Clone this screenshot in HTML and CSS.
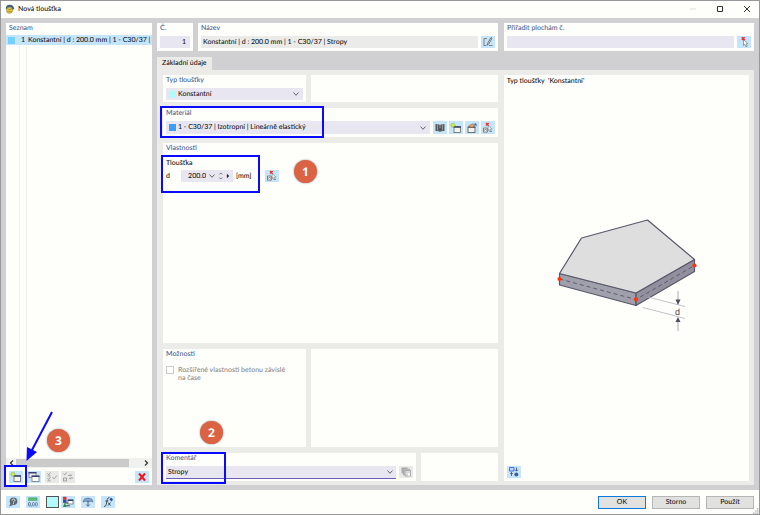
FILE: index.html
```
<!DOCTYPE html>
<html lang="cs">
<head>
  <meta charset="UTF-8">
  <title>Nová tloušťka</title>
  <link rel="stylesheet" href="styles.css">
</head>
<body>
  <svg class="defs" aria-hidden="true">
    <symbol id="chevron" viewBox="0 0 8 8"><path d="M1.5 2.5 4 5.3 6.5 2.5" fill="none" stroke="#666" stroke-width="1"/></symbol>
    <symbol id="new" viewBox="0 0 14 12">
      <rect x="5" y="5" width="6.5" height="5.5" fill="#f4f4ee" stroke="#777" stroke-width=".9"/>
      <path d="M4.500 4.200h7.500v1.500H4.500z" fill="#3a4070"/>
      <path d="M4 .8v5M1.500 3.300h5M2.200 1.500l3.600 3.600M5.800 1.500 2.200 5.100" stroke="#7fae16" stroke-width=".8"/>
      <circle cx="4" cy="3.300" r="1.400" fill="#d6ee25"/>
    </symbol>
    <symbol id="edit-window" viewBox="0 0 14 12">
      <rect x="3" y="5" width="7" height="5.5" fill="#f2f0ec" stroke="#666" stroke-width=".9"/>
      <path d="M3 4.500h7.500v1.500H3z" fill="#6d6262"/>
      <path d="M4 3.500 8 1.800l2 1-2.500 2.400H4.500z" fill="#dda070" stroke="#8b5d42" stroke-width=".5"/>
      <path d="M9 2l2-1 1 3-2.500-.7z" fill="#4673bd"/>
    </symbol>
    <symbol id="pick" viewBox="0 0 14 12">
      <path d="M2.500 6h3.800v4.200H2.500z" fill="#eee" stroke="#666" stroke-width=".8"/>
      <path d="M3.500 8.500l1-1.500 1 1.500M8.500 9.500H11" fill="none" stroke="#666" stroke-width=".7"/>
      <path d="M7.200 3.500v5l1.200-1 1 2 .9-.5-1-1.900 1.600-.2z" fill="#fff" stroke="#777" stroke-width=".6"/>
      <path d="M5 1l2.600 2.600M7.600 1 5 3.600" stroke="#e8292d" stroke-width="1.300"/>
    </symbol>
    <symbol id="cursor" viewBox="0 0 14 12">
      <path d="M6.500 3.500v6l1.400-1.200 1.100 2.500 1.200-.6-1.200-2.400 1.900-.1z" fill="#fff" stroke="#777" stroke-width=".7"/>
      <path d="M4.800 1.200l2.800 2.800M7.600 1.200 4.800 4" stroke="#e8292d" stroke-width="1.400"/>
    </symbol>
    <symbol id="rename" viewBox="0 0 14 12">
      <path d="M6 2.500H3v7M3 9.500h2M8 9.500h3.500" fill="none" stroke="#777" stroke-width=".9"/>
      <path d="M10 1.500 6.500 7.500 6 9.300l1.500-1 3.500-6z" fill="#eee" stroke="#555" stroke-width=".8"/>
    </symbol>
    <symbol id="books" viewBox="0 0 14 12">
      <path d="M2.500 2 6 2.500l1 .5 1-.5 3.500-.5v7L8 9.200 7 10 6 9.200l-3.500-.2z" fill="#55585a"/>
      <path d="M4.500 2.500v6M9.500 2.500v6M7 2v4" stroke="#b9c6ce" stroke-width=".6"/>
    </symbol>
    <symbol id="copy-window" viewBox="0 0 14 12">
      <rect x="2" y="1.5" width="7" height="5" fill="#eee" stroke="#777" stroke-width=".8"/>
      <path d="M1.600 1h7.800v1.500H1.600z" fill="#3a4070"/>
      <rect x="5" y="5" width="7" height="5.5" fill="#fff" stroke="#777" stroke-width=".8"/>
      <path d="M4.600 4.500h7.800v1.500H4.600z" fill="#3a4070"/>
    </symbol>
    <symbol id="check-all" viewBox="0 0 14 12">
      <path d="M2.500 2.500l1.200 1.500L5.500 1.500M2.500 7l1.200 1.500L5.500 6M7.500 6l1.500 1.800L12 4.500M2.500 5h3M2.500 9.800h3" fill="none" stroke="#989898" stroke-width=".9"/>
    </symbol>
    <symbol id="check-swap" viewBox="0 0 14 12">
      <path d="M2.500 2.500l1.200 1.500L5.500 1.500M2.500 7h3v3h-3zM7 4.500h3.500L9.500 3.300M12 7H8.500l1 1.300" fill="none" stroke="#989898" stroke-width=".9"/>
    </symbol>
    <symbol id="delete" viewBox="0 0 14 12"><path d="M4 2.500 10 9.500M10 2.500 4 9.500" stroke="#f0141c" stroke-width="2"/></symbol>
    <symbol id="help" viewBox="0 0 14 12">
      <circle cx="7.500" cy="5.300" r="3.800" fill="#5d666e"/>
      <path d="M4.500 7.500 3 10.500l4-1.500z" fill="#5d666e"/>
      <path d="M6 4.500q0-1.500 1.500-1.500T9 4.500q0 .8-1.500 1.200v.8M7.500 7.200v.9" fill="none" stroke="#e5eef5" stroke-width=".9"/>
    </symbol>
    <symbol id="units" viewBox="0 0 14 12">
      <rect x="2" y="1.500" width="9.500" height="3.500" fill="#62bd80"/>
      <path d="M4 1.500v1.500M6 1.500v1.500M8 1.500v1.500M10 1.500v1.500" stroke="#3d8a5a" stroke-width=".6"/>
      <path d="M5.300 9.500v1" stroke="#446186"/>
      <rect x="2.500" y="6.500" width="1.800" height="3.500" rx=".8" fill="none" stroke="#446186" stroke-width=".8"/>
      <rect x="6.500" y="6.500" width="1.800" height="3.500" rx=".8" fill="none" stroke="#58799e" stroke-width=".8"/>
      <rect x="9.500" y="6.500" width="1.800" height="3.500" rx=".8" fill="none" stroke="#58799e" stroke-width=".8"/>
    </symbol>
    <symbol id="display" viewBox="0 0 14 12">
      <path d="M4 7h3.500M4 9.800h5" stroke="#333" fill="none" stroke-width=".9"/>
      <path d="M2 .8h3.500v3H2z" fill="#e02c2c"/><path d="M2 3.800h3.500v3H2z" fill="#3a4a9b"/><path d="M3.700 6.500 5.500 11H2z" fill="#2c9149"/>
      <rect x="7" y="4" width="5" height="4" fill="#fff" stroke="#666" stroke-width=".7"/>
      <path d="M6.700 3.500h5.600v1.500H6.700z" fill="#3a4070"/>
    </symbol>
    <symbol id="umbrella" viewBox="0 0 14 12">
      <path d="M2 6Q2.500 2 7 2t5 4l-2-.8L7.500 6 5 5.200z" fill="#7ea8d2" stroke="#56677b" stroke-width=".6"/>
      <path d="M7 4.500v5.500M5.300 8.500 7 10.300l1.700-1.800" fill="none" stroke="#56677b"/>
    </symbol>
    <symbol id="fx" viewBox="0 0 14 12">
      <path d="M3 10.500q1.700.2 2.200-2L6.300 3.500Q6.800 1.300 8.500 1.700M4.300 5h3M7 6.500l2.500 3M9.500 6.500l-2.500 3" fill="none" stroke="#333f50" stroke-width=".9"/>
      <path d="M8.500 3.500 10 1.500l2 2-1.500 2z" fill="#3b4b8f"/>
    </symbol>
    <symbol id="copies" viewBox="0 0 14 12">
      <path d="M2.500 1.500h6v6h-6z" fill="#aaa"/><path d="M4.500 3h6v6h-6z" fill="#c9c9c9" stroke="#999" stroke-width=".6"/>
      <path d="M6 4.500h5.500V10H6z" fill="#dadada" stroke="#999" stroke-width=".7"/><path d="M9 7.500h2v2H9z" fill="#fff"/>
    </symbol>
    <symbol id="view" viewBox="0 0 14 12">
      <path d="M2.500 1.500h4.500v3.500H2.500z" fill="#c3d8ff" stroke="#3d70ec"/><path d="M9.500 1.500v3.500M8 3.700l1.500 1.500L11 3.700M4.500 10V6.500M3.200 8l1.300-1.500L5.800 8" fill="none" stroke="#42474e" stroke-width=".8"/>
      <circle cx="9.300" cy="8.500" r="2" fill="#405f9c"/>
    </symbol>
  </svg>

  <div class="window">
    <header class="titlebar">
      <svg class="app-icon" viewBox="0 0 10 10" aria-hidden="true">
        <path d="M.8 5.500Q.5 1 4.500.8q4-.2 4.700 4L7.500 6 6 3 3 3.500z" fill="#41617f"/>
        <circle cx="4.500" cy="6.300" r="3" fill="#e7c72f" stroke="#7d7134" stroke-width=".6"/>
        <path d="M3 5.500h3M3.500 7.500h3" stroke="#a58b1d" stroke-width=".7"/>
      </svg>
      <h1>Nová tloušťka</h1>
      <div class="window-controls">
        <button disabled aria-label="Minimalizovat"><svg viewBox="0 0 8 8"><path d="M1 4h6" stroke="#ddd"/></svg></button>
        <button aria-label="Maximalizovat"><svg viewBox="0 0 8 8"><path d="M1.500 1.500h5v5h-5z" fill="none" stroke="#333"/></svg></button>
        <button aria-label="Zavřít"><svg viewBox="0 0 8 8"><path d="M1 1l6 6M7 1 1 7" stroke="#333"/></svg></button>
      </div>
    </header>

    <div class="workspace">
      <aside class="card sidebar">
        <h2>Seznam</h2>
        <div class="list">
          <table>
            <tr>
              <td class="col-color"><span class="swatch sky"></span></td>
              <td class="col-no">1</td>
              <td class="col-name">Konstantní | d : 200.0 mm | 1 - C30/37 | Stropy</td>
            </tr>
          </table>
        </div>
        <div class="scrollbar">
          <svg viewBox="0 0 8 8"><path d="M5.500 1.500 3 4l2.500 2.500" fill="none" stroke="#333" stroke-width="1.200"/></svg>
          <div class="track"><div class="thumb"></div></div>
          <svg viewBox="0 0 8 8"><path d="M2.500 1.500 5 4 2.500 6.500" fill="none" stroke="#333" stroke-width="1.200"/></svg>
        </div>
        <div class="list-tools">
          <button class="tool" aria-label="Nový"><svg><use href="#new"/></svg></button>
          <button class="tool" aria-label="Kopírovat"><svg><use href="#copy-window"/></svg></button>
          <button class="tool off gap" disabled aria-label="Vybrat vše"><svg><use href="#check-all"/></svg></button>
          <button class="tool off" disabled aria-label="Obrátit výběr"><svg><use href="#check-swap"/></svg></button>
          <button class="tool push" aria-label="Smazat"><svg><use href="#delete"/></svg></button>
          <span class="mark mark-new"></span>
          <span class="step step-3">3</span>
          <svg class="arrow" viewBox="0 0 30 54" aria-hidden="true">
            <path d="M27 2 7 40" stroke="#0a0aff" stroke-width="2"/>
            <path d="M1.500 51 2 37l10 5z" fill="#0a0aff"/>
          </svg>
        </div>
      </aside>

      <main>
        <div class="columns">
          <div class="head-left">
            <section class="card number">
              <label for="no">Č.</label>
              <input class="field" id="no" value="1">
            </section>
            <section class="card grow">
              <label for="name">Název</label>
              <div class="line">
                <input class="field readonly" id="name" value="Konstantní | d : 200.0 mm | 1 - C30/37 | Stropy" readonly>
                <button class="tool" aria-label="Upravit název"><svg><use href="#rename"/></svg></button>
              </div>
            </section>
          </div>
          <section class="card">
            <label for="surfaces">Přiřadit plochám č.</label>
            <div class="line">
              <input class="field" id="surfaces">
              <button class="tool" aria-label="Vybrat plochy"><svg><use href="#cursor"/></svg></button>
            </div>
          </section>
        </div>

        <nav class="tabs"><button class="tab">Základní údaje</button></nav>

        <div class="tab-page columns">
          <div class="form">
            <div class="pair">
              <section class="card">
                <label for="type">Typ tloušťky</label>
                <div class="field combo">
                  <span class="swatch aqua"></span>
                  <select id="type"><option>Konstantní</option></select>
                  <svg class="chevron"><use href="#chevron"/></svg>
                </div>
              </section>
              <section class="card"></section>
            </div>

            <section class="card material">
              <label for="material">Materiál</label>
              <div class="line">
                <div class="field combo">
                  <span class="swatch blue"></span>
                  <select id="material"><option>1 - C30/37 | Izotropní | Lineárně elastický</option></select>
                  <svg class="chevron"><use href="#chevron"/></svg>
                </div>
                <div class="tool-group">
                  <button class="tool" aria-label="Knihovna"><svg><use href="#books"/></svg></button>
                  <button class="tool" aria-label="Nový materiál"><svg><use href="#new"/></svg></button>
                  <button class="tool" aria-label="Upravit materiál"><svg><use href="#edit-window"/></svg></button>
                  <button class="tool" aria-label="Vybrat materiál"><svg><use href="#pick"/></svg></button>
                </div>
              </div>
              <span class="mark mark-material"></span>
            </section>

            <section class="card properties">
              <h2>Vlastnosti</h2>
              <h3>Tloušťka</h3>
              <div class="thickness">
                <label for="d">d</label>
                <div class="field spin">
                  <input id="d" value="200.0">
                  <svg class="chevron"><use href="#chevron"/></svg>
                  <svg class="spin-arrows" viewBox="0 0 18 10" aria-hidden="true"><path d="M3.500 3.300 5 1.800l1.500 1.500M3.500 6.700 5 8.200l1.500-1.500" fill="none" stroke="#666"/><path d="M11.500 2.500 14 5l-2.500 2.500z" fill="#222"/></svg>
                </div>
                <span class="unit">[mm]</span>
                <button class="tool" aria-label="Převzít tloušťku"><svg><use href="#pick"/></svg></button>
              </div>
              <span class="mark mark-thickness"></span>
              <span class="step step-1">1</span>
            </section>

            <div class="pair options">
              <section class="card">
                <h2>Možnosti</h2>
                <div class="check">
                  <input type="checkbox" id="ext" disabled>
                  <label for="ext">Rozšířené vlastnosti betonu závislé<br>na čase</label>
                </div>
                <span class="step step-2">2</span>
              </section>
              <section class="card"></section>
            </div>

            <div class="comment-row">
              <section class="card">
                <label for="comment">Komentář</label>
                <div class="line">
                  <div class="field combo focused">
                    <input id="comment" value="Stropy" autofocus>
                    <svg class="chevron"><use href="#chevron"/></svg>
                  </div>
                  <button class="tool off" disabled aria-label="Kopírovat komentář"><svg><use href="#copies"/></svg></button>
                </div>
                <span class="mark mark-comment"></span>
              </section>
              <section class="card"></section>
            </div>
          </div>

          <section class="card preview">
            <p>Typ tloušťky &nbsp;'Konstantní'</p>
            <svg class="slab" viewBox="0 0 150 120" role="img" aria-label="Deska s tloušťkou d">
              <g stroke="#5a5868" stroke-width="1.200" stroke-linejoin="round">
                <path d="M9.500 57.500 86 77v12.500L9.500 69z" fill="#a09fac"/>
                <path d="M86 77l58.500-33.500v12L86 89.500z" fill="#92909f"/>
                <path d="M9.500 57.500 31.500 22 97.500 4l47 39.500L86 77z" fill="#dededf"/>
              </g>
              <path d="M9.500 63 86 83.500 144.500 49.500" fill="none" stroke="#4d4b5c" stroke-dasharray="4 3" stroke-width=".8"/>
              <path d="M98 81l37 9.500M93 91.500l42 11" stroke="#b5b5bd" stroke-width=".8"/>
              <path d="M128 75v12M128 103v12" stroke="#9a9aa5" stroke-width=".8"/>
              <path d="M125.500 83.500h5L128 89zM125.500 106h5l-2.500-5z" fill="#4d4b5c"/>
              <text x="125" y="99">d</text>
              <g fill="#ff3208"><circle cx="9.500" cy="63" r="2.100"/><circle cx="86" cy="83.500" r="2.100"/><circle cx="144.500" cy="49.500" r="2.100"/></g>
            </svg>
            <button class="tool" aria-label="Přepnout zobrazení"><svg><use href="#view"/></svg></button>
          </section>
        </div>
      </main>
    </div>

    <footer>
      <div class="footer-tools">
        <button class="tool" aria-label="Nápověda"><svg><use href="#help"/></svg></button>
        <button class="tool" aria-label="Jednotky"><svg><use href="#units"/></svg></button>
        <div class="color-tools">
          <button class="color" aria-label="Barva"></button>
          <button class="tool" aria-label="Zobrazení"><svg><use href="#display"/></svg></button>
        </div>
        <button class="tool" aria-label="Filtr"><svg><use href="#umbrella"/></svg></button>
        <button class="tool" aria-label="Funkce"><svg><use href="#fx"/></svg></button>
      </div>
      <div class="actions">
        <button class="action default">OK</button>
        <button class="action">Storno</button>
        <button class="action">Použít</button>
      </div>
      <svg class="grip" viewBox="0 0 6 6" aria-hidden="true"><path d="M4 0h1.500v1.500H4zM4 2.200h1.500v1.500H4zM4 4.400h1.500v1.500H4zM2 2.200h1.500v1.500H2zM2 4.400h1.500v1.500H2zM0 4.400h1.500v1.500H0z" fill="#bbb"/></svg>
    </footer>
  </div>
</body>
</html>
```
FILE: styles.css
```
* {
  box-sizing: border-box;
}
body {
  margin: 0;
  font-family: Lato, Roboto, sans-serif;
  font-size: 7px;
  font-weight: 500;
  line-height: 9px;
  color: #111;
  text-rendering: geometricPrecision;
}
h1, h2, h3, p {
  margin: 0;
  font-size: 7px;
  font-weight: 500;
}
button, input, select {
  font: inherit;
  color: inherit;
  border: none;
  padding: 0;
  margin: 0;
  background: none;
  outline: none;
  min-width: 0;
  text-rendering: inherit;
}
svg {
  display: block;
}
.defs {
  position: absolute;
  width: 0;
  height: 0;
}
.window {
  display: flex;
  flex-direction: column;
  min-height: 100vh;
  background: #fefefb;
  border: 1px solid #98989a;
}

/* title bar */
.titlebar {
  display: flex;
  align-items: center;
  height: 17px;
  padding: 0 8px 1px 4px;
}
.app-icon {
  width: 10px;
  height: 10px;
  margin-right: 3px;
}
.window-controls {
  display: flex;
  gap: 19px;
  margin-left: auto;
}
.window-controls svg {
  width: 8px;
  height: 8px;
}

.workspace {
  flex: 1;
  display: flex;
  gap: 5px;
  padding: 5px;
  background: #d0d0d2;
}
.card {
  position: relative;
  padding: 1px 3px 3px;
  background: #fefefb;
}
.card h2,
.card > label {
  display: block;
  color: #47608f;
}

/* list on the left */
.sidebar {
  display: flex;
  flex-direction: column;
  width: 146px;
  padding: 1px 0 2px;
}
.sidebar h2 {
  padding: 0 3px 2px;
}
.list {
  flex: 1;
  overflow: hidden;
  background: linear-gradient(90deg, transparent 13px, #f0f0ee 13px 14px, transparent 14px 20px, #f0f0ee 20px 21px, transparent 21px);
}
.list table {
  width: 100%;
  table-layout: fixed;
  border-collapse: collapse;
  background: #c5e5fc;
}
.list td {
  height: 10px;
  padding: 0;
  overflow: hidden;
  white-space: nowrap;
}
.list .col-color {
  width: 13px;
  padding-left: 2px;
}
.list .col-no {
  width: 9px;
  padding-left: 2px;
}
.swatch {
  display: block;
  flex: none;
  width: 7px;
  height: 7px;
}
.sky {
  background: #74d0fd;
}
.aqua {
  background: #b2fafb;
}
.blue {
  background: #3a9ff5;
}
.scrollbar {
  display: flex;
  align-items: center;
  height: 10px;
  padding: 0 1px;
  background: #f1f1f0;
}
.scrollbar svg {
  width: 9px;
  height: 8px;
}
.track {
  flex: 1;
}
.thumb {
  width: 90%;
  height: 8px;
  background: #cbcbcb;
}
.list-tools {
  position: relative;
  display: flex;
  gap: 4px;
  padding: 3px 3px 0;
}
.list-tools .off + .off {
  margin-left: -2px;
}
.list-tools .push {
  margin-left: auto;
}

main {
  flex: 1;
  display: flex;
  flex-direction: column;
  min-width: 0;
}
.columns {
  display: grid;
  grid-template-columns: minmax(0, 341fr) minmax(0, 250fr);
  gap: 6px;
}
.head-left {
  display: flex;
  gap: 5px;
}
.number {
  width: 36px;
}
.grow {
  flex: 1;
}
.line {
  display: flex;
  gap: 3px;
}
.field {
  flex: 1;
  display: block;
  width: 100%;
  height: 12px;
  margin-top: 3px;
  padding: 0 4px;
  background: #e8e7f1;
}
.line .tool {
  margin-top: 3px;
}
.number .field {
  text-align: right;
}
.field.readonly {
  padding: 0 2px;
  background: #ebebea;
}
.tool {
  flex: none;
  width: 14px;
  height: 12px;
  background: #c5e5fa;
}
.tool svg {
  width: 14px;
  height: 12px;
}
.off {
  background: #e9e9e8;
}

/* tab page */
.tabs {
  display: flex;
  margin-top: 6px;
}
.tab {
  height: 13px;
  padding: 0 5px;
  background: #ebebe8;
}
.tab-page {
  flex: 1;
  padding: 5px 5px 4px 6px;
  background: #ebebe8;
}
.form {
  display: flex;
  flex-direction: column;
  gap: 6px;
}
.pair {
  display: grid;
  grid-template-columns: minmax(0, 143fr) minmax(0, 187fr);
  gap: 5px;
}
.pair .card {
  padding-bottom: 2px;
}
.combo {
  display: flex;
  align-items: center;
  padding: 0 3px;
}
.combo select,
.combo input {
  flex: 1;
  appearance: none;
  padding-left: 2px;
}
.combo input {
  padding-left: 0;
}
.chevron {
  flex: none;
  width: 8px;
  height: 8px;
  pointer-events: none;
}
.tool-group {
  display: flex;
  gap: 2px;
}
.material .field,
.material .tool {
  height: 13px;
}
.properties {
  flex: 2;
}
.card h3 {
  margin-top: 6px;
}
.thickness {
  display: flex;
  align-items: center;
  margin-top: 2px;
}
.thickness label {
  width: 15px;
}
.thickness .spin {
  flex: none;
  display: flex;
  align-items: center;
  width: 52px;
  margin: 0;
  padding: 0;
}
.spin input {
  flex: 1;
  text-align: right;
}
.spin .chevron {
  margin-left: 2px;
}
.spin-arrows {
  width: 17px;
  height: 10px;
}
.unit {
  width: 32px;
  padding-left: 3px;
}
.options {
  flex: 1;
}
.check {
  display: flex;
  gap: 4px;
  margin-top: 7px;
  line-height: 8px;
  color: #888;
}
.check input {
  appearance: none;
  width: 8px;
  height: 8px;
  border: 1px solid #ccc;
}
.comment-row {
  display: grid;
  grid-template-columns: minmax(0, 253fr) minmax(0, 77fr);
  gap: 5px;
}
.comment-row .card {
  padding-bottom: 2px;
}
.focused {
  height: 13px;
  padding: 0 2px;
  border-bottom: 1px solid #6a5fb5;
}
.preview {
  display: flex;
  flex-direction: column;
}
.preview p {
  padding-top: 1px;
}
.slab {
  flex: 1;
  align-self: center;
  width: 150px;
  margin: 0 3px 0 0;
}
.slab text {
  font-family: "Liberation Sans", sans-serif;
  font-size: 9px;
  fill: #4d4b5c;
}

/* footer */
footer {
  position: relative;
  display: flex;
  align-items: center;
  justify-content: space-between;
  height: 24px;
  padding: 0 5px;
}
.footer-tools {
  display: flex;
  gap: 6px;
}
.color-tools {
  display: flex;
  gap: 2px;
}
.color {
  width: 13px;
  height: 12px;
  background: #b2fafb;
  border: 1px solid #555;
}
.actions {
  display: flex;
  gap: 6px;
}
.action {
  width: 48px;
  height: 13px;
  line-height: 9px;
  background: #e1e1e0;
  border: 1px solid #b5b5b5;
}
.default {
  border-color: #0a7bdc;
}
.grip {
  position: absolute;
  right: 0;
  bottom: 0;
  width: 6px;
  height: 6px;
}

/* numbered tutorial marks over the dialog */
.mark {
  position: absolute;
  border: 2px solid #0a0aff;
  pointer-events: none;
}
.mark-material {
  top: -2px;
  bottom: -1px;
  left: -3px;
  width: 164px;
}
.mark-thickness {
  top: 12px;
  left: -2px;
  width: 99px;
  height: 38px;
}
.mark-comment {
  top: -1px;
  bottom: -3px;
  left: -2px;
  width: 65px;
}
.mark-new {
  bottom: -4px;
  left: -2px;
  width: 23px;
  height: 22px;
}
.step {
  position: absolute;
  width: 23px;
  height: 23px;
  border-radius: 50%;
  background: #db6243;
  box-shadow: 0 0 2px #888;
  color: #fff;
  font-family: "Open Sans", sans-serif;
  font-size: 12px;
  font-weight: bold;
  line-height: 23px;
  text-align: center;
}
.step-1 {
  top: 17px;
  left: 131px;
}
.step-2 {
  bottom: 3px;
  left: 37px;
}
.step-3 {
  bottom: 31px;
  left: 41px;
}
.arrow {
  position: absolute;
  bottom: 19px;
  left: 19px;
  width: 30px;
  height: 54px;
}
```
